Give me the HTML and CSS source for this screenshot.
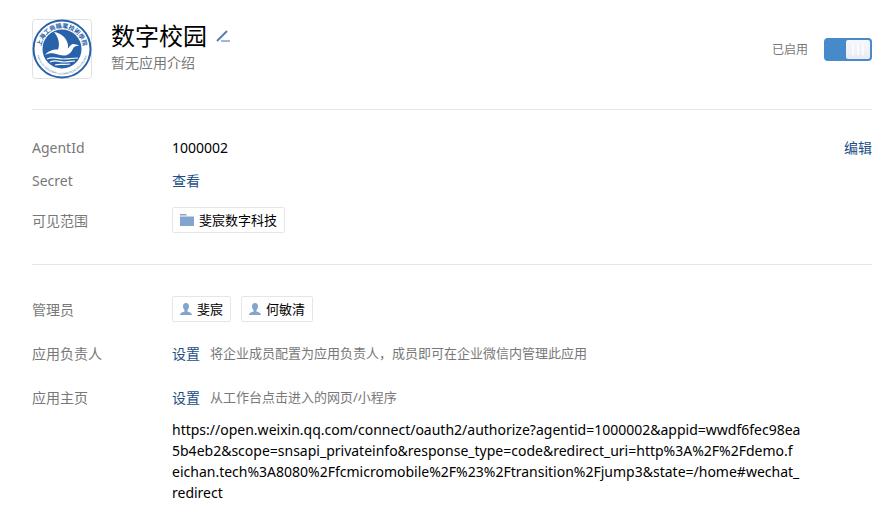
FILE: index.html
```html
<!DOCTYPE html>
<html lang="zh-CN">
<head>
<meta charset="utf-8">
<meta name="viewport" content="width=device-width, initial-scale=1">
<title>数字校园</title>
<link rel="stylesheet" href="styles.css">
</head>
<body>
<svg class="defs" aria-hidden="true">
  <symbol id="user" viewBox="0 0 12 12">
    <path d="M6 0C3.900 0 3 1.400 3 3.300c0 1.600.6 2.800 1.500 3.600v1.600C3 9.200 0 9.600 0 12h12c0-2.400-3-2.800-4.500-3.500V6.900C8.400 6.100 9 4.900 9 3.300 9 1.400 8.100 0 6 0z"/>
  </symbol>
</svg>
<main class="page">
  <header class="header">
    <svg class="logo" viewBox="0 0 60 60" aria-hidden="true">
      <defs>
        <path id="arc-top" d="M11.500 40A21 21 0 1 1 48.500 40"/>
        <path id="arc-bottom" d="M4.500 33A25.700 25.700 0 0 0 55.500 33"/>
      </defs>
      <rect class="logo-frame" x=".5" y=".5" width="59" height="59" rx="3"/>
      <circle class="logo-ring" cx="30" cy="30" r="28.500"/>
      <circle class="logo-disc" cx="30" cy="30" r="19.500"/>
      <text class="logo-cn"><textPath href="#arc-top" startOffset="50%">上海工商職業技術學院</textPath></text>
      <text class="logo-en"><textPath href="#arc-bottom" startOffset="50%">SHANGHAI INDUSTRIAL &amp; COMMERCIAL POLYTECHNIC</textPath></text>
      <path class="logo-bird" d="M22 13c7 1 13 6 14 13 .2 1.300 0 2.500-.3 3.500 1.500-.8 2-3 4-4 2.200-.9 4.300-.2 7.300 1.500-3 0-4.500.3-5.500 1.800-1.500 2.400-2.500 5.700-6.500 7.200-5 1.600-9-1-13-1.500-3.500-.5-6.500.2-9 1.500 2.500-3.500 7-5.500 13-5.500 2-4.500 1-12-4-17.500z"/>
      <path class="logo-wave" d="M15 40c6-3 11 0 16 0s9-1 15-1M18 43c6-3 9 0 14 0s7-1 11-1M23 46c4-1.500 8 0 15-1"/>
    </svg>
    <div class="intro">
      <div class="title-row">
        <h1 class="title">数字校园</h1>
        <button class="rename" type="button" aria-label="修改名称">
          <svg viewBox="0 0 14 12" width="14" height="12"><path class="pen" d="M1 11L11 1"/><path class="pen-line" d="M5 11h9"/></svg>
        </button>
      </div>
      <p class="summary">暂无应用介绍</p>
    </div>
    <label class="status" for="enabled">已启用</label>
    <input class="switch" id="enabled" type="checkbox" checked>
  </header>

  <section class="section basic">
    <dl class="rows">
      <div class="row"><dt>AgentId</dt><dd>1000002</dd></div>
      <div class="row"><dt>Secret</dt><dd><a href="#secret">查看</a></dd></div>
      <div class="row row-scope"><dt>可见范围</dt><dd>
        <span class="tag"><svg viewBox="0 0 14 12" width="14" height="12"><path d="M0 0h6l1 1.500H0zM0 2.500h14V12H0z"/></svg>斐宸数字科技</span>
      </dd></div>
    </dl>
    <a class="edit" href="#edit">编辑</a>
  </section>

  <section class="section manage">
    <dl class="rows">
      <div class="row"><dt>管理员</dt><dd>
        <span class="tag"><svg width="12" height="12"><use href="#user"/></svg>斐宸</span>
        <span class="tag"><svg width="12" height="12"><use href="#user"/></svg>何敏清</span>
      </dd></div>
      <div class="row"><dt>应用负责人</dt><dd><a href="#owner">设置</a><span class="hint">将企业成员配置为应用负责人，成员即可在企业微信内管理此应用</span></dd></div>
      <div class="row"><dt>应用主页</dt><dd><a href="#home">设置</a><span class="hint">从工作台点击进入的网页/小程序</span></dd></div>
    </dl>
    <p class="url">https://open.weixin.qq.com/connect/oauth2/authorize?agentid=1000002&amp;appid=wwdf6fec98ea<wbr>5b4eb2&amp;scope=snsapi_privateinfo&amp;response_type=code&amp;redirect_uri=http%3A%2F%2Fdemo.f<wbr>eichan.tech%3A8080%2Ffcmicromobile%2F%23%2Ftransition%2Fjump3&amp;state=/home#wechat_<wbr>redirect</p>
  </section>
</main>
</body>
</html>
```
FILE: styles.css
```css
* { box-sizing: border-box; }

body {
  margin: 0;
  background: #fff;
  color: #000;
  font: 14px/21px "Noto Sans", "Noto Sans CJK SC", sans-serif;
}

h1, p, dl, dd { margin: 0; }

a { color: #1c4f87; text-decoration: none; }
a:hover { text-decoration: underline; }

.defs { position: absolute; width: 0; height: 0; }

.page { padding: 19px 23px 16px 32px; }

.header {
  display: flex;
  align-items: center;
  padding-bottom: 30px;
  border-bottom: 1px solid #e4e6e9;
}

.logo { width: 60px; height: 60px; flex: none; }
.logo-frame { fill: #fff; stroke: #dfe1e4; }
.logo-ring { fill: #fff; stroke: #2862a8; stroke-width: 2; }
.logo-disc { fill: #2862a8; }
.logo-cn, .logo-en { fill: #2862a8; text-anchor: middle; }
.logo-cn { font-family: "Noto Sans CJK TC", sans-serif; font-size: 6px; font-weight: 700; }
.logo-en { font-family: "Liberation Sans", sans-serif; font-size: 2.5px; }
.logo-bird { fill: #fff; }
.logo-wave { fill: none; stroke: #fff; stroke-width: 1.2; }

.intro { flex: 1; margin-left: 19px; padding-bottom: 5px; }
.title-row { display: flex; align-items: center; gap: 9px; }
.title { font-size: 24px; line-height: 32px; font-weight: 400; }
.rename { display: flex; padding: 0; border: 0; background: none; cursor: pointer; }
.pen { fill: none; stroke: #557fad; stroke-width: 2; }
.pen-line { fill: none; stroke: #9ab9da; stroke-width: 2; }
.summary { color: #787878; }

.status { color: #787878; font-size: 12px; }

.switch {
  appearance: none;
  display: flex;
  width: 48px;
  height: 23px;
  margin: 0 0 0 16px;
  padding: 2px;
  border-radius: 4px;
  background: #b8bec6;
  cursor: pointer;
}
.switch:checked { justify-content: flex-end; background: #468ac9; }
.switch::before {
  content: "";
  width: 24px;
  border-radius: 2px;
  background:
    linear-gradient(90deg, #fafbfd 2px, transparent 2px 5px, #fafbfd 5px 7px, transparent 7px 10px, #fafbfd 10px 12px) center / 12px 12px no-repeat,
    linear-gradient(#f6f8fb, #e9ecf3);
}

.section { display: flex; align-items: flex-start; }
.row { display: flex; align-items: center; min-height: 33px; }
dt { width: 140px; flex: none; color: #787878; }
dd { display: flex; align-items: center; gap: 10px; }

.basic { padding: 21px 0; border-bottom: 1px solid #e4e6e9; }
.basic .rows { flex: 1; }
.row-scope { min-height: 46px; }
.edit { line-height: 33px; }

.manage { flex-direction: column; padding-top: 22px; }
.manage .row { min-height: 44px; }

.tag {
  display: inline-flex;
  align-items: center;
  gap: 5px;
  height: 26px;
  padding: 0 7px;
  border: 1px solid #e4e6e9;
  border-radius: 2px;
  font-size: 13px;
}
.tag svg { fill: #82a5d0; }

.hint { color: #787878; font-size: 13px; }

.url { max-width: 650px; margin-left: 140px; overflow-wrap: anywhere; }
```
